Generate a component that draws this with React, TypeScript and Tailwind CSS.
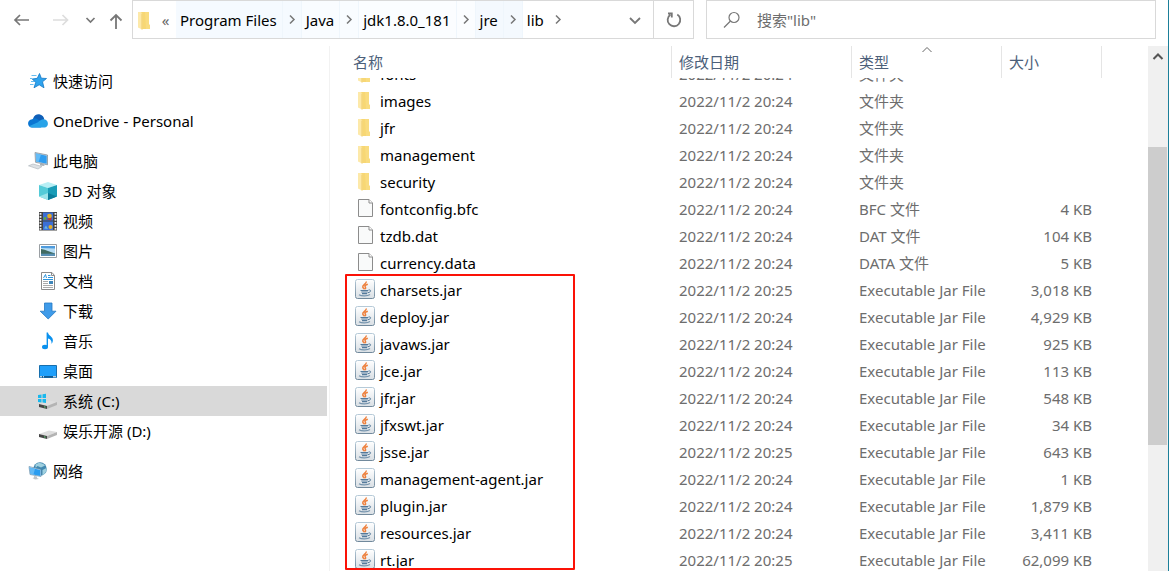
import type { ReactNode } from "react";

type Kind = "folder" | "file" | "jar";
type Row = { name: string; kind: Kind; date: string; type: string; size?: string };

const JAR = "Executable Jar File";
const rows: Row[] = [
  { name: "fonts", kind: "folder", date: "2022/11/2 20:24", type: "文件夹" },
  { name: "images", kind: "folder", date: "2022/11/2 20:24", type: "文件夹" },
  { name: "jfr", kind: "folder", date: "2022/11/2 20:24", type: "文件夹" },
  { name: "management", kind: "folder", date: "2022/11/2 20:24", type: "文件夹" },
  { name: "security", kind: "folder", date: "2022/11/2 20:24", type: "文件夹" },
  { name: "fontconfig.bfc", kind: "file", date: "2022/11/2 20:24", type: "BFC 文件", size: "4 KB" },
  { name: "tzdb.dat", kind: "file", date: "2022/11/2 20:24", type: "DAT 文件", size: "104 KB" },
  { name: "currency.data", kind: "file", date: "2022/11/2 20:24", type: "DATA 文件", size: "5 KB" },
  { name: "charsets.jar", kind: "jar", date: "2022/11/2 20:25", type: JAR, size: "3,018 KB" },
  { name: "deploy.jar", kind: "jar", date: "2022/11/2 20:24", type: JAR, size: "4,929 KB" },
  { name: "javaws.jar", kind: "jar", date: "2022/11/2 20:24", type: JAR, size: "925 KB" },
  { name: "jce.jar", kind: "jar", date: "2022/11/2 20:24", type: JAR, size: "113 KB" },
  { name: "jfr.jar", kind: "jar", date: "2022/11/2 20:24", type: JAR, size: "548 KB" },
  { name: "jfxswt.jar", kind: "jar", date: "2022/11/2 20:24", type: JAR, size: "34 KB" },
  { name: "jsse.jar", kind: "jar", date: "2022/11/2 20:25", type: JAR, size: "643 KB" },
  { name: "management-agent.jar", kind: "jar", date: "2022/11/2 20:24", type: JAR, size: "1 KB" },
  { name: "plugin.jar", kind: "jar", date: "2022/11/2 20:24", type: JAR, size: "1,879 KB" },
  { name: "resources.jar", kind: "jar", date: "2022/11/2 20:24", type: JAR, size: "3,411 KB" },
  { name: "rt.jar", kind: "jar", date: "2022/11/2 20:25", type: JAR, size: "62,099 KB" },
];

function Icon({ children }: { children: ReactNode }) {
  return (
    <svg width="20" height="20" viewBox="0 0 20 20" className="shrink-0" aria-hidden="true">
      {children}
    </svg>
  );
}

function FolderIcon() {
  return (
    <Icon>
      <path d="M6 2H14V14.5L15 15V19H6Z" fill="#f7d774" />
      <path d="M10 2H14V14.5L15 15V19H11Z" fill="#f9dc80" />
      <path d="M3 2H6L7.5 4V19.5L6 19L3 17.5Z" fill="#fde9a9" />
      <path d="M6.5 3.5L7.5 4V19.5H6.5Z" fill="#efcb68" />
    </Icon>
  );
}

function FileIcon() {
  return (
    <Icon>
      <path d="M3.5 1.5H14L17.5 5V18.5H3.5Z" fill="#f9fafa" stroke="#8c8c8c" />
      <path d="M14 1.5V5H17.5" fill="#fff" stroke="#8c8c8c" />
    </Icon>
  );
}

function JarIcon() {
  return (
    <Icon>
      <defs>
        <linearGradient id="jarFace" x1="0" y1="0" x2="0" y2="1">
          <stop offset="0" stopColor="#ffffff" />
          <stop offset="1" stopColor="#d9dfe4" />
        </linearGradient>
        <linearGradient id="jarEdge" x1="0" y1="0" x2="0" y2="1">
          <stop offset="0" stopColor="#b6cad8" />
          <stop offset="1" stopColor="#71899c" />
        </linearGradient>
      </defs>
      <rect x="0.5" y="0.5" width="19" height="19" rx="2" fill="url(#jarFace)" stroke="url(#jarEdge)" />
      <path d="M11.2 2.5C11.800 5 6.800 5.800 7.800 8.200C8.200 9.200 9.300 9.400 9.400 10.400M12.800 5.200C10.300 6 9.400 7 10.400 8.200C11 9 10.600 9.600 10.200 10.200" fill="none" stroke="#ee7f3b" strokeWidth="1.5" />
      <path d="M5.500 11.500H13.200M6.300 13H12.800M7 14.600H12.200" fill="none" stroke="#547a9b" strokeWidth="1.1" />
      <path d="M13.500 11C16.500 10.400 16.300 13.200 13 13.700" fill="none" stroke="#547a9b" />
      <path d="M4 15.800C6.500 17.400 12.500 17.300 15 15.600" fill="none" stroke="#7694ad" strokeWidth="1.200" />
    </Icon>
  );
}

const fileIcons: Record<Kind, () => ReactNode> = { folder: FolderIcon, file: FileIcon, jar: JarIcon };

const star = (
  <Icon>
    <path d="M11.500 2.500L13.300 7.200L18.500 7.500L14.500 10.800L16 16.800L11.200 13.800L6 16.800L7.700 11.500L4.300 8L9.300 7.300Z" fill="#2ea3ee" stroke="#1176c4" strokeWidth="0.800" />
    <path d="M3.500 4.500H8.500M2 7.500H4.500M3 10.500H6M2 13.500H5.500" stroke="#66bdf0" />
  </Icon>
);
const cloud = (
  <Icon>
    <path d="M5 8C6 4 9.5 2.8 12 3.5C14.5 4.2 16 6 16.3 8.5L10 12Z" fill="#0f5fb8" />
    <path d="M4 16.5C-1 16.2-1.5 9 4.2 8.2C6 7 8 7.2 9.5 8.2L16 12L13 16.5Z" fill="#0a76d2" />
    <path d="M1.500 15L10 11.200C11.500 9.500 14 8 16 8.300C20.500 8.500 21.500 15.500 17 16.500H4.200C2.800 16.400 2 15.800 1.500 15Z" fill="#28a3e8" />
  </Icon>
);
const pc = (
  <Icon>
    <path d="M7 1.500L19.500 4V13.800L7.500 11.300Z" fill="#c9d2d9" stroke="#7d8a94" strokeWidth="0.700" />
    <path d="M7.800 2.500L18.700 4.700V12.800L8.200 10.500Z" fill="#2f9df0" />
    <path d="M7.800 2.500L13 3.600L10.500 11L8.200 10.500Z" fill="#64bcf7" />
    <path d="M12 12.500L16 13.300L16.500 15L12 14.500Z" fill="#a5aeb5" />
    <path d="M0.500 14.800L5 13L14 15.500L10 18Z" fill="#dde1e5" stroke="#aab1b7" strokeWidth="0.600" />
  </Icon>
);
const cube = (
  <Icon>
    <path d="M1 4L10 1L19 4L10 7Z" fill="#b7eff5" />
    <path d="M1 4L10 7V19L1 15.5Z" fill="#54cbd8" />
    <path d="M19 4L10 7V19L19 15.5Z" fill="#199cb7" />
    <path d="M1 15.5L10 12V19Z" fill="#9be4ea" />
    <path d="M19 15.5L10 12V19Z" fill="#0b7d9b" />
  </Icon>
);
const film = (
  <Icon>
    <path d="M1 1H19V19.500H1Z" fill="#444" />
    <path d="M5 1.500H15V9.500H5ZM5 10.500H15V19H5Z" fill="#3b6fd6" />
    <path d="M2.500 2V19M17.500 2V19" stroke="#f2f2f2" strokeWidth="1.800" strokeDasharray="1.800 1.200" />
    <circle cx="11.5" cy="5" r="2.3" fill="#e4ad25" />
    <circle cx="7" cy="7.5" r="1.4" fill="#62a83e" />
    <path d="M8 8L14 6.5L13 9.5Z" fill="#c3392e" />
    <circle cx="12.5" cy="16" r="2" fill="#e4ad25" />
    <path d="M6 17.5L8 14.5L10 18Z" fill="#62b6e4" />
  </Icon>
);
const picture = (
  <Icon>
    <path d="M1.5 3.5H18.5V16.5H1.5Z" fill="#fff" stroke="#9a9fa3" />
    <path d="M3 5H17V15H3Z" fill="#b5dcf4" />
    <path d="M3 5H17V7.500L3 7Z" fill="#4e9bdd" />
    <path d="M3 8C8 8.500 12 11 17 12.500V13H3Z" fill="#416b61" />
    <path d="M3 12.700H17V15H3Z" fill="#588fb4" />
  </Icon>
);
const doc = (
  <Icon>
    <path d="M3.500 1.500H14L16.500 4.500V18.500H3.500Z" fill="#fff" stroke="#8b8b8b" />
    <path d="M13.500 1.500V4.500H16.500" fill="none" stroke="#8b8b8b" />
    <path d="M5.500 7L7.500 3.500L8.500 7M10 4.500H12.500M10 6.500H15M5 8.500H15" fill="none" stroke="#2d95dd" />
    <path d="M5 10.500H10M5 12.500H10M5 14.500H15M5 16.500H15" stroke="#aaa" />
    <path d="M11 10H15V13H11Z" fill="#3f86b9" />
  </Icon>
);
const download = (
  <Icon>
    <path d="M6.5 2H14V10.2H18L10.2 18L2.2 10.2H6.5Z" fill="#3f9be9" stroke="#2578c4" strokeWidth="0.8" />
  </Icon>
);
const music = (
  <Icon>
    <ellipse cx="7" cy="16" rx="3" ry="2.2" fill="#0a91ee" />
    <path d="M8.6 1.5H10C10.5 5 15.2 5.5 14.9 9.5C14.8 11 14.2 12 13.4 12.8C14.2 9.8 12 8 10 7.5V16H8.6Z" fill="#0a91ee" />
  </Icon>
);
const desktop = (
  <Icon>
    <path d="M1.500 4.500H18.500V16.500H1.500Z" fill="#1f9ffa" stroke="#176fae" />
    <path d="M2 15H18V16.500H2Z" fill="#125b91" />
    <path d="M2 15.800H4M5 15.800H6M15 15.800H18" stroke="#fff" />
  </Icon>
);
const driveShape = (
  <>
    <path d="M1 13L11 9.500L19 11L9 15Z" fill="#dedede" />
    <path d="M1 13L9 15V18L1 16Z" fill="#454545" />
    <path d="M9 15L19 11V14L9 18Z" fill="#b4b4b4" />
    <path d="M6 15.800L7.500 16.200" stroke="#55d872" />
  </>
);
const drive = <Icon>{driveShape}</Icon>;
const systemDrive = (
  <Icon>
    {driveShape}
    <path d="M0 4L3.500 3.500V7H0ZM4.500 3.300L8 2.800V7H4.500ZM0 8H3.500V11.500L0 11ZM4.500 8H8V12L4.500 11.600Z" fill="#19b8ee" />
  </Icon>
);
const network = (
  <Icon>
    <circle cx="12" cy="8" r="6.800" fill="#4288b0" />
    <path d="M7.500 3.500C10 1 15 1.500 17 4.500L13 6.500L9.500 5L7.500 7ZM14.500 9L18.500 7C19 10 17 13 14.500 14.500Z" fill="#9fd0df" />
    <path d="M1 5.500L13 8.500V15.500L2 13.500Z" fill="#d5e3ec" stroke="#5885a2" strokeWidth="0.600" />
    <path d="M1.600 6.400L12.400 9V14.900L2.500 13Z" fill="#2a9df0" />
    <path d="M1.600 6.400L7 7.700L5.500 13.600L2.500 13Z" fill="#62b9f5" />
    <path d="M6 15L9 15.500V17L11 18L7 18.500L4.500 17L6 16.500Z" fill="#bdc4c9" />
  </Icon>
);

type NavItem = { label: string; icon: ReactNode; child?: boolean; selected?: boolean };
const navGroups: NavItem[][] = [
  [{ label: "快速访问", icon: star }],
  [{ label: "OneDrive - Personal", icon: cloud }],
  [
    { label: "此电脑", icon: pc },
    { label: "3D 对象", icon: cube, child: true },
    { label: "视频", icon: film, child: true },
    { label: "图片", icon: picture, child: true },
    { label: "文档", icon: doc, child: true },
    { label: "下载", icon: download, child: true },
    { label: "音乐", icon: music, child: true },
    { label: "桌面", icon: desktop, child: true },
    { label: "系统 (C:)", icon: systemDrive, child: true, selected: true },
    { label: "娱乐开源 (D:)", icon: drive, child: true },
  ],
  [{ label: "网络", icon: network }],
];

function Chevron() {
  return (
    <svg width="18" height="18" viewBox="0 0 18 18" fill="none" stroke="#777" strokeWidth="1.5" aria-hidden="true">
      <path d="M7 4.500L11 8.500L7 12.500" />
    </svg>
  );
}

function Crumb({ label, tint }: { label: string; tint: string }) {
  return (
    <span className={`flex items-stretch ${tint}`}>
      <button className="pl-1 pr-[5px]">{label}</button>
      <button aria-label={`${label} ›`} className="flex items-center border-x border-[#eff6fc]">
        <Chevron />
      </button>
    </span>
  );
}

function TopBar() {
  return (
    <header className="flex h-[39px] shrink-0 pr-3">
      <nav className="flex w-[132px] shrink-0 items-center">
        <button aria-label="后退" className="pl-3">
          <svg width="20" height="20" viewBox="0 0 20 20" fill="none" stroke="#777" strokeWidth="1.7"><path d="M17 10H3M8 5L3 10L8 15" /></svg>
        </button>
        <button aria-label="前进" disabled className="pl-5">
          <svg width="20" height="20" viewBox="0 0 20 20" fill="none" stroke="#ddd" strokeWidth="1.7"><path d="M1 10H15M10.5 5L15.5 10L10.5 15" /></svg>
        </button>
        <button aria-label="最近浏览的位置" className="pl-2">
          <svg width="20" height="20" viewBox="0 0 20 20" fill="none" stroke="#777" strokeWidth="1.7"><path d="M6.5 8L10.5 12L14.5 8" /></svg>
        </button>
        <button aria-label="上移" className="pl-1">
          <svg width="22" height="22" viewBox="0 0 22 22" fill="none" stroke="#777" strokeWidth="1.8"><path d="M12 20V6M6.5 11.500L12 6L17.5 11.500" /></svg>
        </button>
      </nav>
      <div className="flex min-w-0 flex-5 border border-[#d9d9d9]">
        <div className="flex min-w-0 flex-1 items-stretch text-black">
          <span className="flex items-center pl-[2px]"><FolderIcon /></span>
          <span className="flex w-[21px] items-center justify-center text-[#666]">«</span>
          <Crumb label="Program Files" tint="bg-[#f5faff]" />
          <Crumb label="Java" tint="bg-[#f9fcff]" />
          <Crumb label="jdk1.8.0_181" tint="bg-[#fbfdff]" />
          <Crumb label="jre" tint="bg-[#f4f9fe]" />
          <button className="pl-1 pr-[5px]">lib</button>
          <button aria-label="lib ›"><Chevron /></button>
        </div>
        <button aria-label="以前的位置" className="flex w-9 items-center justify-center">
          <svg width="16" height="16" viewBox="0 0 16 16" fill="none" stroke="#777" strokeWidth="1.8"><path d="M3 6L8 11L13 6" /></svg>
        </button>
        <button aria-label="刷新" className="flex w-10 items-center justify-center border-l border-[#d9d9d9]">
          <svg width="18" height="18" viewBox="0 0 18 18" fill="none" stroke="#777" strokeWidth="1.8">
            <path d="M12.3 3.6A6.3 6.3 0 1 1 5.3 3.8M3 2.5H6.8V6.5" />
          </svg>
        </button>
      </div>
      <label className="ml-3 flex min-w-0 flex-4 items-center border border-[#d9d9d9]">
        <svg width="18" height="18" viewBox="0 0 18 18" fill="none" stroke="#777" strokeWidth="1.2" className="ml-4 shrink-0">
          <circle cx="11" cy="6.500" r="5" /><path d="M7.500 10L1 16.500" />
        </svg>
        <input aria-label="搜索" placeholder={'搜索"lib"'} className="ml-4 min-w-0 flex-1 bg-transparent outline-none placeholder:text-[#6d6d6d]" />
      </label>
    </header>
  );
}

function SideBar() {
  return (
    <aside className="flex w-[330px] shrink-0 flex-col gap-[10px] border-r border-[#f2f2f2] pr-[2px] pt-5 text-black">
      {navGroups.map((group) => (
        <ul key={group[0].label}>
          {group.map((item) => (
            <li key={item.label}>
              <a
                href="#"
                className={`flex h-[30px] items-center gap-[5px] ${item.child ? "pl-[38px]" : "pl-7"} ${item.selected ? "bg-[#d9d9d9]" : ""}`}
              >
                {item.icon}
                {item.label}
              </a>
            </li>
          ))}
        </ul>
      ))}
    </aside>
  );
}

function Cell({ clipped, children, className = "" }: { clipped: boolean; children?: ReactNode; className?: string }) {
  return (
    <td className={`p-0 ${className}`}>
      <div className={`flex flex-col justify-end overflow-hidden ${clipped ? "h-[10px]" : "h-[27px]"}`}>
        <div className="h-[27px] shrink-0 leading-[27px]">{children}</div>
      </div>
    </td>
  );
}

function FileList() {
  const heading = "border-r border-[#e5e5e5] p-0 text-left font-normal";
  return (
    <main className="relative min-w-0 flex-1 overflow-hidden">
      <table className="w-full table-fixed border-separate border-spacing-0 whitespace-nowrap text-[#6d6d6d]">
        <colgroup>
          <col className="w-[342px]" />
          <col className="w-[180px]" />
          <col className="w-[150px]" />
          <col className="w-[100px]" />
          <col />
        </colgroup>
        <thead className="text-[#4c607a]">
          <tr className="h-8">
            <th className={`${heading} pl-[23px]`}>名称</th>
            <th className={`${heading} pl-[7px]`}>修改日期</th>
            <th className={`${heading} relative pl-[7px]`}>
              类型
              <svg width="12" height="7" viewBox="0 0 12 7" fill="none" stroke="#666" className="absolute left-1/2 top-0 -translate-x-1/2">
                <path d="M1.5 6L6 1.5L10.5 6" />
              </svg>
            </th>
            <th className={`${heading} pl-[7px]`}>大小</th>
            <th className="p-0" />
          </tr>
        </thead>
        <tbody>
          {rows.map((row, i) => {
            const RowIcon = fileIcons[row.kind];
            const clipped = i === 0;
            return (
              <tr key={row.name}>
                <Cell clipped={clipped} className="text-black">
                  <span className="flex h-full items-center gap-[5px] pl-[25px]">
                    <span className="mb-[3px]"><RowIcon /></span>
                    {row.name}
                  </span>
                </Cell>
                <Cell clipped={clipped} className="pl-[7px]">{row.date}</Cell>
                <Cell clipped={clipped} className="pl-[7px]">{row.type}</Cell>
                <Cell clipped={clipped} className="pr-[10px] text-right">{row.size}</Cell>
                <td className="p-0" />
              </tr>
            );
          })}
        </tbody>
      </table>
      <div className="pointer-events-none absolute bottom-px left-[15px] top-[228px] w-[230px] rounded-[1px] border-2 border-[#fb1207]" />
    </main>
  );
}

function ScrollBar() {
  return (
    <div className="flex w-5 shrink-0 flex-col bg-[#f0f0f0] pr-px">
      <button aria-label="向上滚动" className="flex h-[22px] items-center justify-center">
        <svg width="12" height="12" viewBox="0 0 12 12" fill="none" stroke="#555" strokeWidth="2"><path d="M1.5 8L6 3.5L10.5 8" /></svg>
      </button>
      <div className="flex flex-1 flex-col">
        <div className="flex-79" />
        <div className="flex-298 bg-[#cdcdcd]" />
        <div className="flex-126" />
      </div>
    </div>
  );
}

export default function App() {
  return (
    <div className="flex h-screen flex-col overflow-hidden border-r border-[#1b7f99] bg-white font-['Noto_Sans','Noto_Sans_CJK_SC',sans-serif] text-[15px] leading-5">
      <TopBar />
      <div className="flex min-h-0 flex-1 pt-[7px]">
        <SideBar />
        <FileList />
        <ScrollBar />
      </div>
    </div>
  );
}
